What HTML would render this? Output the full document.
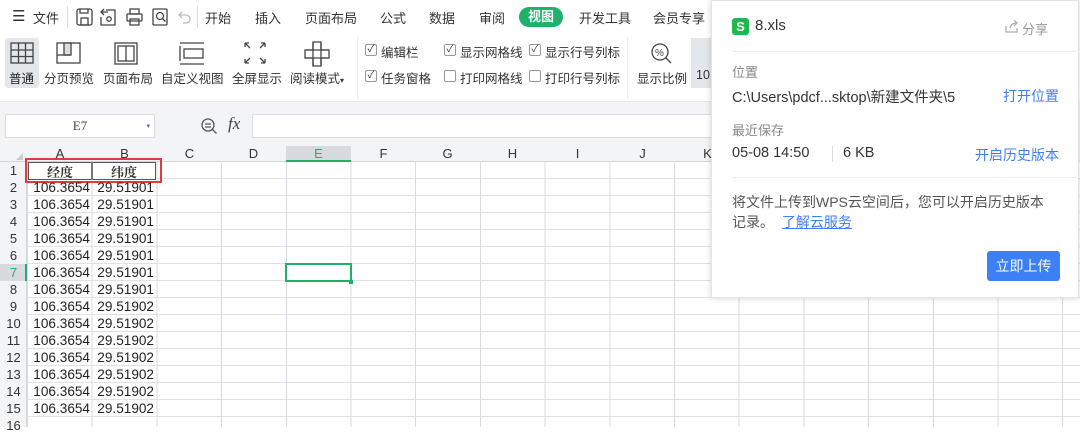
<!DOCTYPE html>
<html><head><meta charset="utf-8"><style>
*{margin:0;padding:0;box-sizing:border-box}
body{width:1080px;height:427px;overflow:hidden;position:relative;background:#fff;font-family:"Liberation Sans","Noto Sans CJK SC",sans-serif;color:#333}
.a{position:absolute;white-space:nowrap}
.menu{font-size:13px;color:#333;top:8px}
.rb{font-size:12.5px;color:#333;top:68px}
.cb{position:absolute;width:12px;height:12px;border:1px solid #999;border-radius:2px;background:#fff;font-size:10px;line-height:10px;text-align:center;color:#333}
.cl{font-size:12.5px;color:#333}
.grid{position:absolute;left:27px;top:162px;width:1053px;height:265px;
background-image:repeating-linear-gradient(90deg,#d9dbe3 0 1px,transparent 1px 64.7px),repeating-linear-gradient(180deg,transparent 0 16px,#dfe1e7 16px 17px)}
.ch{position:absolute;top:146px;height:16px;font-size:13px;text-align:center;line-height:16px;color:#333}
.rn{position:absolute;left:0;width:27px;font-size:13px;text-align:center;line-height:17px;height:17px;color:#333}
.d{position:absolute;font-size:13.6px;line-height:17px;text-align:right;color:#222}
</style></head><body>
<div class="a menu" style="left:12px;top:7px;font-size:15px">☰</div>
<div class="a menu" style="left:33px">文件</div>
<div class="a" style="left:67px;top:6px;width:1px;height:22px;background:#ddd"></div>
<svg class="a" style="left:76px;top:8px" width="120" height="18" fill="none" stroke="#444" stroke-width="1.3">
<rect x="1" y="1" width="15" height="16" rx="2"/><rect x="5" y="10" width="7" height="7"/><path d="M4 1v4h8V1"/>
<path d="M30 2h9v15h-14V9M28 1l-3 3 3 3M25 4h7"/><circle cx="33" cy="11" r="2.2"/>
<rect x="51" y="6" width="15" height="7" rx="1"/><rect x="54" y="1" width="9" height="5"/><rect x="54" y="11" width="9" height="6"/>
<rect x="77" y="1" width="14" height="16" rx="1"/><circle cx="84" cy="8" r="3.5"/><path d="M86.5 10.5l3 3"/>
<path d="M106 4l-3 3 3 3M103 7h7a4 4 0 010 8h-3" stroke="#bbb"/></svg>
<div class="a" style="left:197px;top:6px;width:1px;height:22px;background:#ddd"></div>
<div class="a menu" style="left:205px">开始</div>
<div class="a menu" style="left:255px">插入</div>
<div class="a menu" style="left:305px">页面布局</div>
<div class="a menu" style="left:380px">公式</div>
<div class="a menu" style="left:429px">数据</div>
<div class="a menu" style="left:479px">审阅</div>
<div class="a" style="left:519px;top:7px;width:44px;height:20px;border-radius:10px;background:#1fb06a;color:#fff;font-size:13px;font-weight:bold;text-align:center;line-height:20px">视图</div>
<div class="a menu" style="left:579px">开发工具</div>
<div class="a menu" style="left:653px">会员专享</div>
<div class="a" style="left:5px;top:38px;width:34px;height:50px;background:#e3e6ea;border-radius:3px"></div>
<svg class="a" style="left:8px;top:40px" width="340" height="28" fill="none" stroke="#444" stroke-width="1.3">
<rect x="3" y="3" width="22" height="20"/><path d="M3 10h22M3 16.5h22M10.5 3v20M17.5 3v20"/>
<rect x="49" y="3" width="23" height="20"/><rect x="56" y="3" width="7" height="12" fill="#ddd"/><path d="M49 15h14"/>
<rect x="107" y="3" width="22" height="21"/><rect x="110" y="6" width="16" height="15"/><path d="M118 6v15"/>
<path d="M172 3h24M172 24h24M172 6v15"/><rect x="176" y="9" width="19" height="9"/>
<path d="M237 3l5 5M237 3v4M237 3h4M257 3l-5 5M257 3v4M257 3h-4M237 23l5-5M237 23v-4M237 23h4M257 23l-5-5M257 23v-4M257 23h-4"/>
<path d="M305 2h8v8h8v8h-8v8h-8v-8h-8v-8h8z"/><path d="M297 10h24M297 18h24M305 2v24M313 2v24"/></svg>
<div class="a rb" style="left:9px;color:#222">普通</div>
<div class="a rb" style="left:44px">分页预览</div>
<div class="a rb" style="left:103px">页面布局</div>
<div class="a rb" style="left:161px">自定义视图</div>
<div class="a rb" style="left:232px">全屏显示</div>
<div class="a rb" style="left:290px">阅读模式<span style="font-size:8px">▾</span></div>
<div class="a" style="left:357px;top:37px;width:1px;height:62px;background:#eee"></div>
<div class="cb" style="left:365px;top:44px">✓</div><div class="a cl" style="left:381px;top:42px">编辑栏</div>
<div class="cb" style="left:444px;top:44px">✓</div><div class="a cl" style="left:460px;top:42px">显示网格线</div>
<div class="cb" style="left:529px;top:44px">✓</div><div class="a cl" style="left:545px;top:42px">显示行号列标</div>
<div class="cb" style="left:365px;top:70px">✓</div><div class="a cl" style="left:381px;top:68px">任务窗格</div>
<div class="cb" style="left:444px;top:70px"></div><div class="a cl" style="left:460px;top:68px">打印网格线</div>
<div class="cb" style="left:529px;top:70px"></div><div class="a cl" style="left:545px;top:68px">打印行号列标</div>
<div class="a" style="left:627px;top:37px;width:1px;height:62px;background:#eee"></div>
<svg class="a" style="left:650px;top:42px" width="24" height="22" fill="none" stroke="#444" stroke-width="1.3"><circle cx="10" cy="10" r="8"/><path d="M16 16l5 5"/><text x="5" y="14" font-size="10" fill="#444" stroke="none" font-family="Liberation Sans">%</text></svg>
<div class="a rb" style="left:637px">显示比例</div>
<div class="a" style="left:691px;top:38px;width:20px;height:50px;background:#e3e6ea"></div>
<div class="a rb" style="left:696px">10</div>
<div class="a" style="left:0;top:101px;width:1080px;height:61px;background:#f3f4f6;border-top:1px solid #e6e7ea"></div>
<div class="a" style="left:5px;top:114px;width:150px;height:24px;background:#fff;border:1px solid #dcdde0;border-radius:2px;font-size:13px;text-align:center;line-height:22px;font-family:'Liberation Serif',serif;color:#444">E7<span style="position:absolute;right:4px;font-size:7px;color:#666">▾</span></div>
<svg class="a" style="left:200px;top:117px" width="18" height="18" fill="none" stroke="#555" stroke-width="1.3"><circle cx="8" cy="8" r="6"/><path d="M12.5 12.5l4 4M5 7h6M5 10h6"/></svg>
<div class="a" style="left:228px;top:114px;font-size:17px;font-style:italic;font-family:'Liberation Serif',serif;color:#444">fx</div>
<div class="a" style="left:252px;top:114px;width:470px;height:24px;background:#fff;border:1px solid #dcdde0;border-radius:2px"></div>
<div class="a" style="left:0;top:161px;width:1080px;height:1px;background:#d4d6dc"></div>
<div class="a" style="left:286px;top:146px;width:65px;height:16px;background:#d8dadf;border-bottom:2px solid #1fb06a"></div>
<div class="ch" style="left:28px;width:64px">A</div>
<div class="ch" style="left:92px;width:65px">B</div>
<div class="ch" style="left:157px;width:65px">C</div>
<div class="ch" style="left:221px;width:65px">D</div>
<div class="ch" style="left:286px;width:65px;color:#1fb06a">E</div>
<div class="ch" style="left:351px;width:65px">F</div>
<div class="ch" style="left:415px;width:65px">G</div>
<div class="ch" style="left:480px;width:65px">H</div>
<div class="ch" style="left:545px;width:65px">I</div>
<div class="ch" style="left:610px;width:65px">J</div>
<div class="ch" style="left:675px;width:65px">K</div>
<div class="a" style="left:0;top:146px;width:27px;height:16px;"><div style="position:absolute;right:4px;bottom:2px;width:0;height:0;border-left:7px solid transparent;border-bottom:7px solid #ccc"></div></div>
<div class="grid"></div>
<div class="a" style="left:0;top:162px;width:27px;height:265px;background:#f3f4f6;border-right:1px solid #d4d6dc"></div>
<div class="a" style="left:0;top:264px;width:27px;height:17px;background:#d8dadf;border-right:2px solid #1fb06a"></div>
<div class="rn" style="top:162px">1</div><div class="rn" style="top:179px">2</div><div class="rn" style="top:196px">3</div><div class="rn" style="top:213px">4</div><div class="rn" style="top:230px">5</div><div class="rn" style="top:247px">6</div><div class="rn" style="top:264px;color:#1fb06a">7</div><div class="rn" style="top:281px">8</div><div class="rn" style="top:298px">9</div><div class="rn" style="top:315px">10</div><div class="rn" style="top:332px">11</div><div class="rn" style="top:349px">12</div><div class="rn" style="top:366px">13</div><div class="rn" style="top:383px">14</div><div class="rn" style="top:400px">15</div><div class="rn" style="top:417px">16</div>
<div class="a" style="left:28px;top:162px;width:128px;height:18px;border:1px solid #555;background:#fff"></div>
<div class="a" style="left:91px;top:162px;width:2px;height:18px;background:#777"></div>
<div class="a" style="left:28px;top:163px;width:64px;text-align:center;font-size:13px;font-weight:bold;font-family:'Noto Serif CJK SC',serif;line-height:17px">经度</div>
<div class="a" style="left:92px;top:163px;width:64px;text-align:center;font-size:13px;font-weight:bold;font-family:'Noto Serif CJK SC',serif;line-height:17px">纬度</div>
<div class="a" style="left:25px;top:158px;width:137px;height:25px;border:2px solid #e8383d"></div>
<div class="d" style="left:28px;top:179px;width:62px">106.3654</div><div class="d" style="left:92px;top:179px;width:62px">29.51901</div>
<div class="d" style="left:28px;top:196px;width:62px">106.3654</div><div class="d" style="left:92px;top:196px;width:62px">29.51901</div>
<div class="d" style="left:28px;top:213px;width:62px">106.3654</div><div class="d" style="left:92px;top:213px;width:62px">29.51901</div>
<div class="d" style="left:28px;top:230px;width:62px">106.3654</div><div class="d" style="left:92px;top:230px;width:62px">29.51901</div>
<div class="d" style="left:28px;top:247px;width:62px">106.3654</div><div class="d" style="left:92px;top:247px;width:62px">29.51901</div>
<div class="d" style="left:28px;top:264px;width:62px">106.3654</div><div class="d" style="left:92px;top:264px;width:62px">29.51901</div>
<div class="d" style="left:28px;top:281px;width:62px">106.3654</div><div class="d" style="left:92px;top:281px;width:62px">29.51901</div>
<div class="d" style="left:28px;top:298px;width:62px">106.3654</div><div class="d" style="left:92px;top:298px;width:62px">29.51902</div>
<div class="d" style="left:28px;top:315px;width:62px">106.3654</div><div class="d" style="left:92px;top:315px;width:62px">29.51902</div>
<div class="d" style="left:28px;top:332px;width:62px">106.3654</div><div class="d" style="left:92px;top:332px;width:62px">29.51902</div>
<div class="d" style="left:28px;top:349px;width:62px">106.3654</div><div class="d" style="left:92px;top:349px;width:62px">29.51902</div>
<div class="d" style="left:28px;top:366px;width:62px">106.3654</div><div class="d" style="left:92px;top:366px;width:62px">29.51902</div>
<div class="d" style="left:28px;top:383px;width:62px">106.3654</div><div class="d" style="left:92px;top:383px;width:62px">29.51902</div>
<div class="d" style="left:28px;top:400px;width:62px">106.3654</div><div class="d" style="left:92px;top:400px;width:62px">29.51902</div>
<div class="a" style="left:285px;top:263px;width:67px;height:19px;border:2px solid #1fb06a"></div>
<div class="a" style="left:349px;top:280px;width:4px;height:4px;background:#1fb06a"></div>
<div class="a" style="left:711px;top:0;width:368px;height:298px;background:#fff;box-shadow:0 0 6px rgba(0,0,0,.18);border:1px solid #e4e4e4">
<div class="a" style="left:20px;top:17px;width:17px;height:17px;background:#1fb84e;border-radius:3px;color:#fff;font-size:13px;font-weight:bold;text-align:center;line-height:17px">S</div>
<div class="a" style="left:43px;top:16px;font-size:15px;color:#333">8.xls</div>
<svg class="a" style="left:293px;top:19px" width="14" height="13" fill="none" stroke="#aaa" stroke-width="1.2"><path d="M1 6v6h11V8M5 8c1-4 4-5 7-5M9 0l3 3-3 3"/></svg>
<div class="a" style="left:310px;top:18px;font-size:13px;color:#999">分享</div>
<div class="a" style="left:20px;top:50px;width:347px;height:1px;background:#eee"></div>
<div class="a" style="left:20px;top:61px;font-size:13px;color:#888">位置</div>
<div class="a" style="left:20px;top:85px;font-size:14.5px;color:#333">C:\Users\pdcf...sktop\新建文件夹\5</div>
<div class="a" style="left:291px;top:85px;font-size:14px;color:#3d7ff5">打开位置</div>
<div class="a" style="left:20px;top:119px;font-size:13px;color:#888">最近保存</div>
<div class="a" style="left:20px;top:144px;font-size:14.5px;color:#333">05-08 14:50</div>
<div class="a" style="left:120px;top:145px;width:1px;height:16px;background:#ddd"></div>
<div class="a" style="left:131px;top:144px;font-size:14.5px;color:#333">6 KB</div>
<div class="a" style="left:263px;top:144px;font-size:14px;color:#3d7ff5">开启历史版本</div>
<div class="a" style="left:20px;top:176px;width:347px;height:1px;background:#eee"></div>
<div class="a" style="left:20px;top:191px;font-size:14px;color:#555;line-height:20px">将文件上传到WPS云空间后，您可以开启历史版本<br>记录。 <span style="color:#3d7ff5;text-decoration:underline;margin-left:4px">了解云服务</span></div>
<div class="a" style="left:275px;top:250px;width:73px;height:30px;background:#3d7ff5;border-radius:3px;color:#fff;font-size:14px;text-align:center;line-height:30px">立即上传</div>
</div>
</body></html>
